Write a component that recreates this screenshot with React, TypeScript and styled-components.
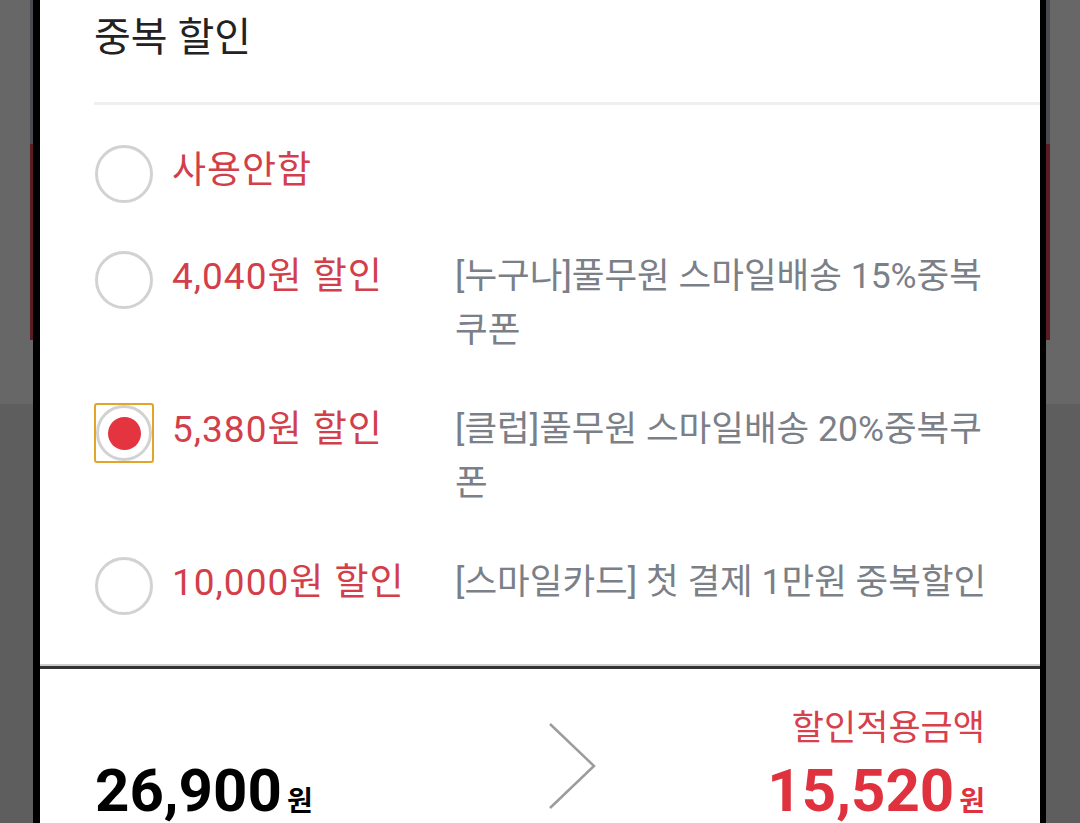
import styled, { createGlobalStyle } from "styled-components";

const GlobalStyle = createGlobalStyle`
  html, body {
    margin: 0;
    padding: 0;
  }
  body {
    background: linear-gradient(to bottom, #676767 0 404px, #5e5e5e 404px);
    font-family: Roboto, "Noto Sans CJK KR", sans-serif;
    overflow: hidden;
  }
`;

const Frame = styled.div`
  margin: 0 30px;
  padding: 0 4px 0 3px;
  height: 823px;
  background: linear-gradient(
    to bottom,
    #4a4b52 0 144px,
    #5b1d22 144px 340px,
    transparent 340px
  );
`;

const Panel = styled.div`
  height: 100%;
  background: #fff;
  border-left: 7px solid #000;
  border-right: 6px solid #000;
`;

const Header = styled.header`
  height: 102px;
  padding: 16px 0 0 54px;
  box-sizing: border-box;
`;

const Title = styled.h2`
  margin: 0;
  font-size: 40px;
  line-height: 44px;
  font-weight: 400;
  color: #222;
`;

const Divider = styled.hr`
  margin: 0 0 0 54px;
  border: 0;
  height: 3px;
  background: #efefef;
`;

const List = styled.ul`
  list-style: none;
  margin: 0;
  padding: 39px 40px 48px 54px;
  display: flex;
  flex-direction: column;
  gap: 46px;
`;

const Row = styled.li`
  display: flex;
  align-items: flex-start;
`;

const RadioBox = styled.span<{ $focused?: boolean }>`
  flex-shrink: 0;
  width: 60px;
  height: 60px;
  box-sizing: border-box;
  padding: ${(p) => (p.$focused ? "0" : "1px")};
  border: ${(p) => (p.$focused ? "2px solid #e2a52a" : "0")};
  border-radius: 3px;
  display: flex;
`;

const Circle = styled.span<{ $checked?: boolean }>`
  flex: 1;
  border: 3px solid #d2d2d2;
  border-radius: 50%;
  display: flex;
  align-items: center;
  justify-content: center;
  &::after {
    content: "";
    width: 33px;
    height: 33px;
    border-radius: 50%;
    background: #e3343f;
    display: ${(p) => (p.$checked ? "block" : "none")};
  }
`;

const Label = styled.span`
  flex-shrink: 0;
  width: 283px;
  margin-left: 18px;
  font-size: 37px;
  line-height: 53.5px;
  letter-spacing: 1px;
  color: #d23f4b;
`;

const Desc = styled.span`
  flex: 1;
  font-size: 35.5px;
  line-height: 53.5px;
  color: #7a7f88;
`;

const Separator = styled.div`
  border-top: 2px solid #cdcdcd;
  border-bottom: 3px solid #333;
`;

const Bottom = styled.div`
  display: grid;
  grid-template-columns: 453px 48px 1fr;
  align-items: end;
  padding: 40px 55px 0 55px;
`;

const Amount = styled.div<{ $red?: boolean }>`
  font-size: 60px;
  line-height: 64px;
  font-weight: 700;
  color: ${(p) => (p.$red ? "#e0323e" : "#000")};
  small {
    font-size: 28px;
    margin-left: 5px;
  }
`;

const Chevron = styled.svg`
  align-self: start;
  margin-top: 13px;
`;

const Result = styled.div`
  text-align: right;
`;

const Caption = styled.div`
  font-size: 35px;
  line-height: 40px;
  margin-bottom: 10px;
  color: #d8404c;
`;

const options = [
  { label: "사용안함", desc: "" },
  { label: "4,040원 할인", desc: "[누구나]풀무원 스마일배송 15%중복쿠폰" },
  { label: "5,380원 할인", desc: "[클럽]풀무원 스마일배송 20%중복쿠폰" },
  { label: "10,000원 할인", desc: "[스마일카드] 첫 결제 1만원 중복할인" },
];

const selected = 2;

export default function App() {
  return (
    <>
      <GlobalStyle />
      <Frame>
        <Panel>
          <Header>
            <Title>중복 할인</Title>
          </Header>
          <Divider />
          <List>
            {options.map((o, i) => (
              <Row key={o.label}>
                <RadioBox $focused={i === selected}>
                  <Circle $checked={i === selected} />
                </RadioBox>
                <Label>{o.label}</Label>
                <Desc>{o.desc}</Desc>
              </Row>
            ))}
          </List>
          <Separator />
          <Bottom>
            <Amount>
              26,900<small>원</small>
            </Amount>
            <Chevron width="48" height="88" viewBox="0 0 48 88">
              <polyline
                points="2,2 46,44 2,86"
                fill="none"
                stroke="#9c9c9c"
                strokeWidth="2.5"
              />
            </Chevron>
            <Result>
              <Caption>할인적용금액</Caption>
              <Amount $red>
                15,520<small>원</small>
              </Amount>
            </Result>
          </Bottom>
        </Panel>
      </Frame>
    </>
  );
}
